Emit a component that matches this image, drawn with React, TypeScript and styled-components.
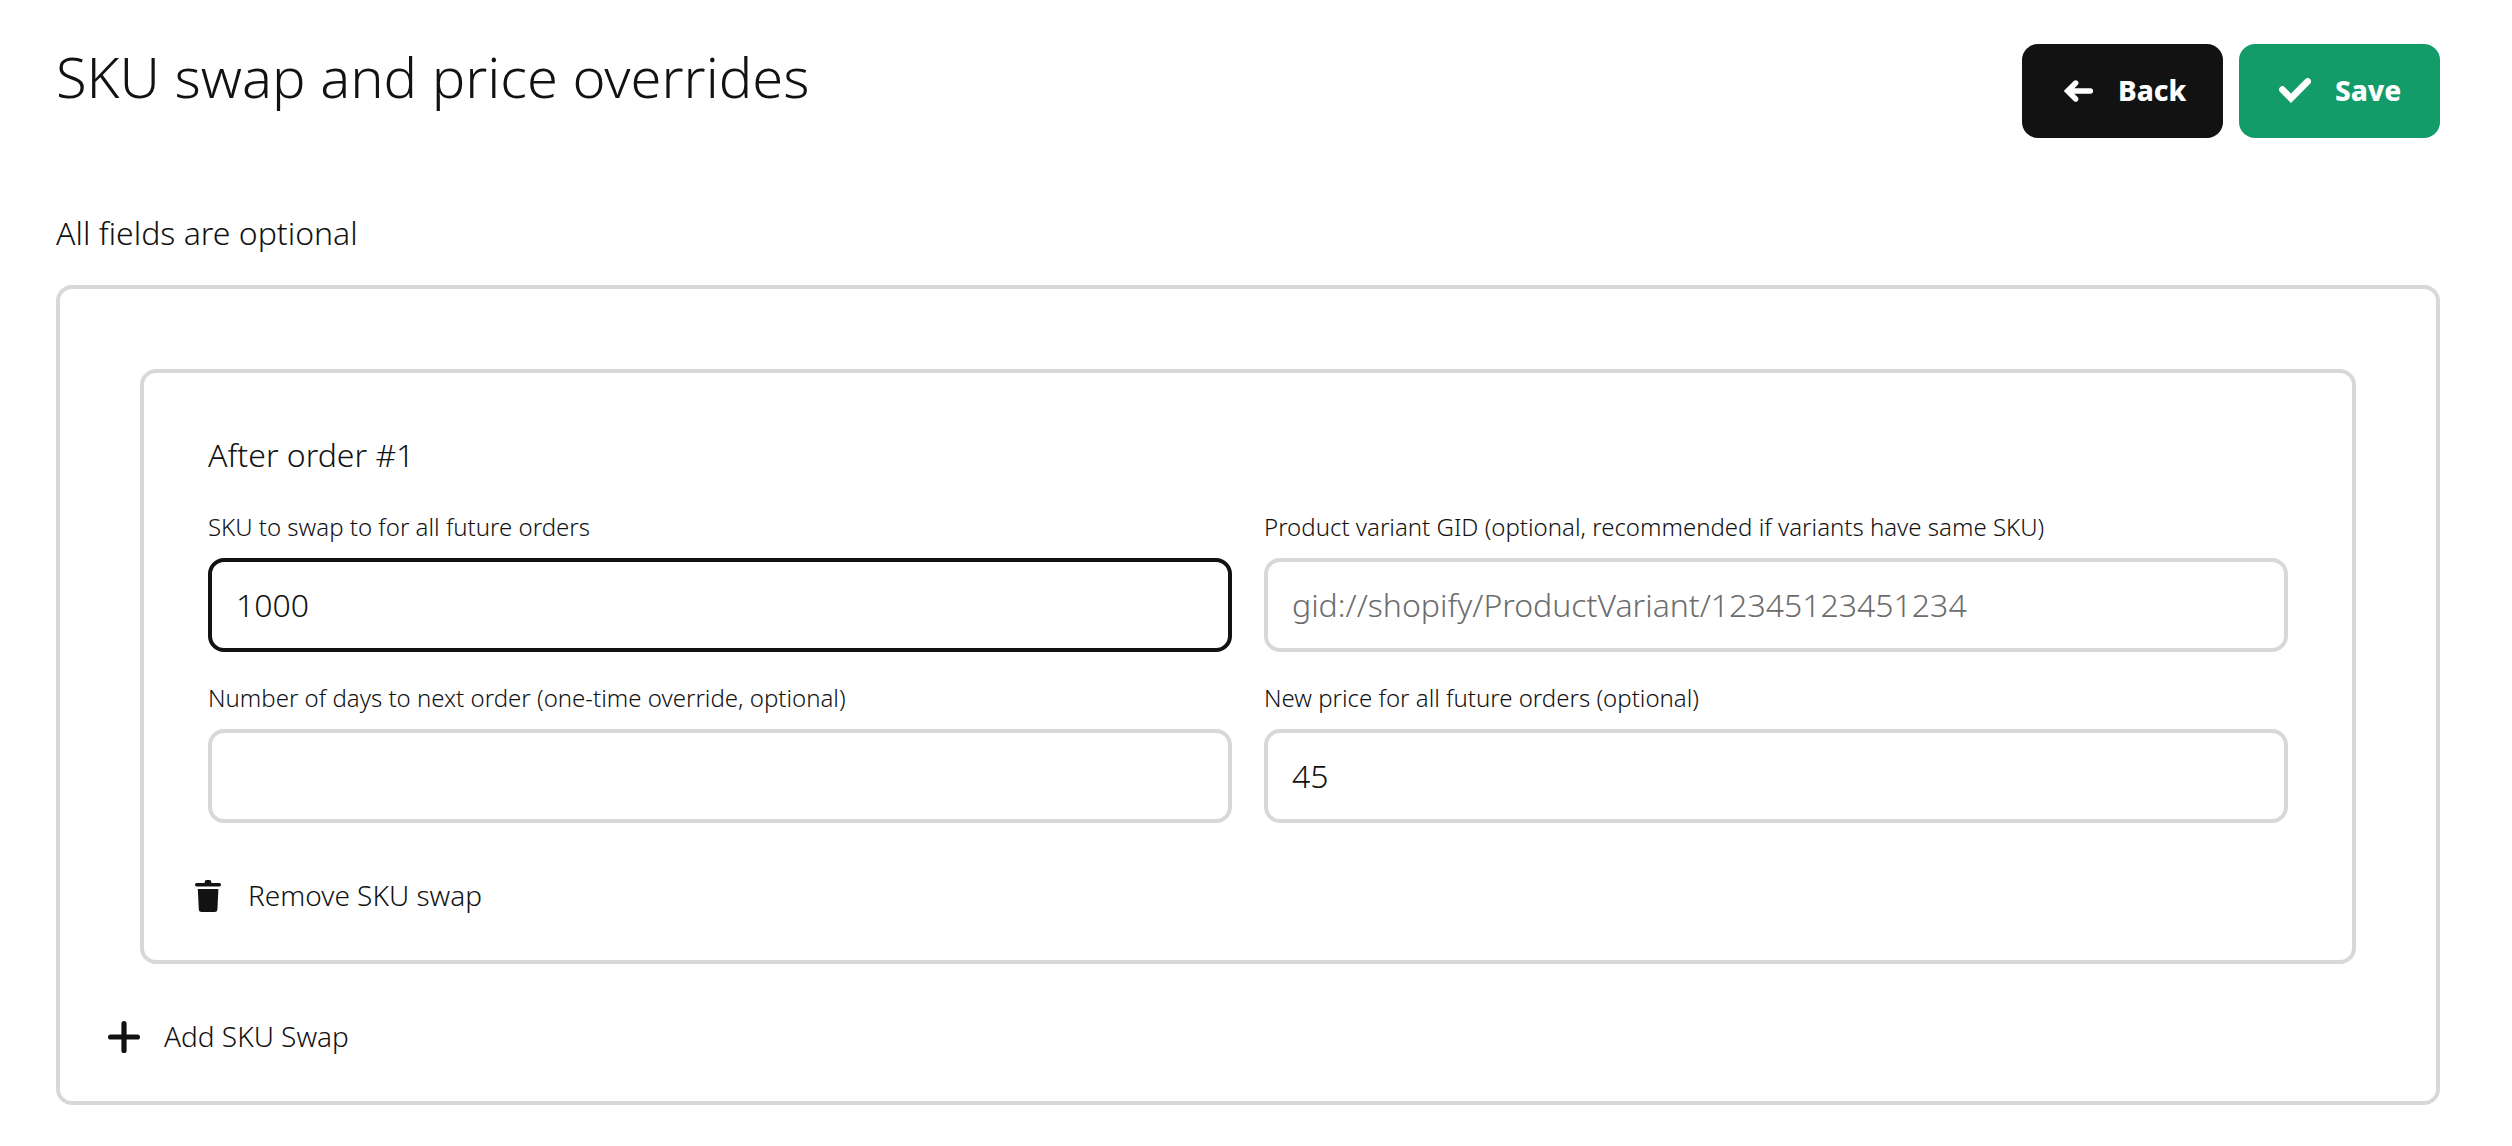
import React, { useId, useState } from "react";
import styled, { createGlobalStyle, css } from "styled-components";

const ink = "#121212";
const line = "#d8d8d8";
const green = "#139c69";

const GlobalStyle = createGlobalStyle`
  *, *::before, *::after { box-sizing: border-box; }
  body {
    margin: 0;
    background: #fff;
    color: ${ink};
    font-family: "Noto Sans", "Open Sans", sans-serif;
    font-weight: 300;
  }
  h1, h2, p { margin: 0; font-weight: inherit; }
  button, input { font-family: inherit; font-weight: inherit; color: inherit; }
`;

const Page = styled.main`
  padding: 44px 72px 40px 56px;
`;

const Header = styled.header`
  display: flex;
  justify-content: space-between;
  align-items: flex-start;
  gap: 32px;
  margin-bottom: 75px;
`;

const Title = styled.h1`
  font-size: 56px;
  line-height: 64px;
`;

const Actions = styled.div`
  display: flex;
  gap: 16px;
`;

const ButtonLabel = styled.span`
  padding-bottom: 2px;
  font-size: 28px;
  line-height: 40px;
`;

const buttonBase = css`
  display: inline-flex;
  align-items: center;
  gap: 24px;
  border: 0;
  cursor: pointer;
`;

const SolidButton = styled.button<{ $background: string }>`
  ${buttonBase}
  min-width: 201px;
  height: 94px;
  padding: 0 32px 0 40px;
  border-radius: 16px;
  background: ${(p) => p.$background};
  color: #fff;
  font-weight: 800;
`;

const TextButton = styled.button`
  ${buttonBase}
  height: 64px;
  margin-top: 41px;
  padding: 0;
  background: none;
`;

const Intro = styled.p`
  margin-bottom: 32px;
  font-size: 32px;
  line-height: 40px;
`;

const Panel = styled.section<{ $top: number }>`
  padding: ${(p) => p.$top}px 48px 32px;
  border: 4px solid ${line};
  border-radius: 16px;
`;

const PanelBody = styled.div<{ $inset: number }>`
  padding: 0 ${(p) => p.$inset}px;
`;

const Heading = styled.h2`
  margin-bottom: 39px;
  font-size: 32px;
  line-height: 36px;
`;

const Fields = styled.div`
  display: grid;
  grid-template-columns: 1fr 1fr;
  gap: 31px 32px;
`;

const FieldBox = styled.div`
  display: flex;
  flex-direction: column;
  gap: 16px;
`;

const Label = styled.label`
  font-size: 24px;
  line-height: 30px;
`;

const Input = styled.input<{ $active?: boolean }>`
  width: 100%;
  height: 94px;
  padding: 0 24px 2px;
  border: 4px solid ${(p) => (p.$active ? ink : line)};
  border-radius: 16px;
  background: #fff;
  font-size: 32px;
  outline: none;

  &:focus {
    border-color: ${ink};
  }

  &::placeholder {
    color: #6c6c6c;
    opacity: 1;
  }
`;

const Icon = styled.svg.attrs({ viewBox: "0 0 32 32", "aria-hidden": true })`
  flex: none;
  width: 32px;
  height: 32px;
  fill: none;
  stroke: currentColor;
  stroke-linecap: round;
`;

const ArrowLeftIcon = () => (
  <Icon strokeWidth={5.4}>
    <path d="M13.7 8 5.6 16l8.1 8M6 16h22.4" />
  </Icon>
);

const CheckIcon = () => (
  <Icon strokeWidth={6.6}>
    <path d="M3.4 14.6 12 23.4 28.7 6.4" />
  </Icon>
);

const TrashIcon = () => (
  <Icon>
    <path
      stroke="none"
      fill="currentColor"
      d="M12.7 3V1.8A1.8 1.8 0 0 1 14.5 0h3a1.8 1.8 0 0 1 1.8 1.8V3h8a1.7 1.7 0 0 1 0 3.5H4.7a1.7 1.7 0 0 1 0-3.5zM5.8 9h20.6l-1 20.6a2.4 2.4 0 0 1-2.4 2.4H9.2a2.4 2.4 0 0 1-2.4-2.4z"
    />
  </Icon>
);

const PlusIcon = () => (
  <Icon strokeWidth={5.2}>
    <path d="M16 2.6v26.8M2.6 16h26.8" />
  </Icon>
);

type FieldProps = {
  label: string;
  initial?: string;
  placeholder?: string;
  active?: boolean;
};

function Field({ label, initial = "", placeholder, active }: FieldProps) {
  const id = useId();
  const [value, setValue] = useState(initial);
  return (
    <FieldBox>
      <Label htmlFor={id}>{label}</Label>
      <Input
        id={id}
        type="text"
        value={value}
        placeholder={placeholder}
        $active={active}
        onChange={(e) => setValue(e.target.value)}
      />
    </FieldBox>
  );
}

export default function App() {
  return (
    <>
      <GlobalStyle />
      <Page>
        <Header>
          <Title>SKU swap and price overrides</Title>
          <Actions>
            <SolidButton type="button" $background={ink}>
              <ArrowLeftIcon />
              <ButtonLabel>Back</ButtonLabel>
            </SolidButton>
            <SolidButton type="button" $background={green}>
              <CheckIcon />
              <ButtonLabel>Save</ButtonLabel>
            </SolidButton>
          </Actions>
        </Header>

        <Intro>All fields are optional</Intro>

        <Panel $top={80}>
          <PanelBody $inset={32}>
            <Panel $top={64}>
              <PanelBody $inset={16}>
                <Heading>After order #1</Heading>
                <Fields>
                  <Field label="SKU to swap to for all future orders" initial="1000" active />
                  <Field
                    label="Product variant GID (optional, recommended if variants have same SKU)"
                    placeholder="gid://shopify/ProductVariant/12345123451234"
                  />
                  <Field label="Number of days to next order (one-time override, optional)" />
                  <Field label="New price for all future orders (optional)" initial="45" />
                </Fields>
              </PanelBody>
              <TextButton type="button">
                <TrashIcon />
                <ButtonLabel>Remove SKU swap</ButtonLabel>
              </TextButton>
            </Panel>
          </PanelBody>
          <TextButton type="button">
            <PlusIcon />
            <ButtonLabel>Add SKU Swap</ButtonLabel>
          </TextButton>
        </Panel>
      </Page>
    </>
  );
}
